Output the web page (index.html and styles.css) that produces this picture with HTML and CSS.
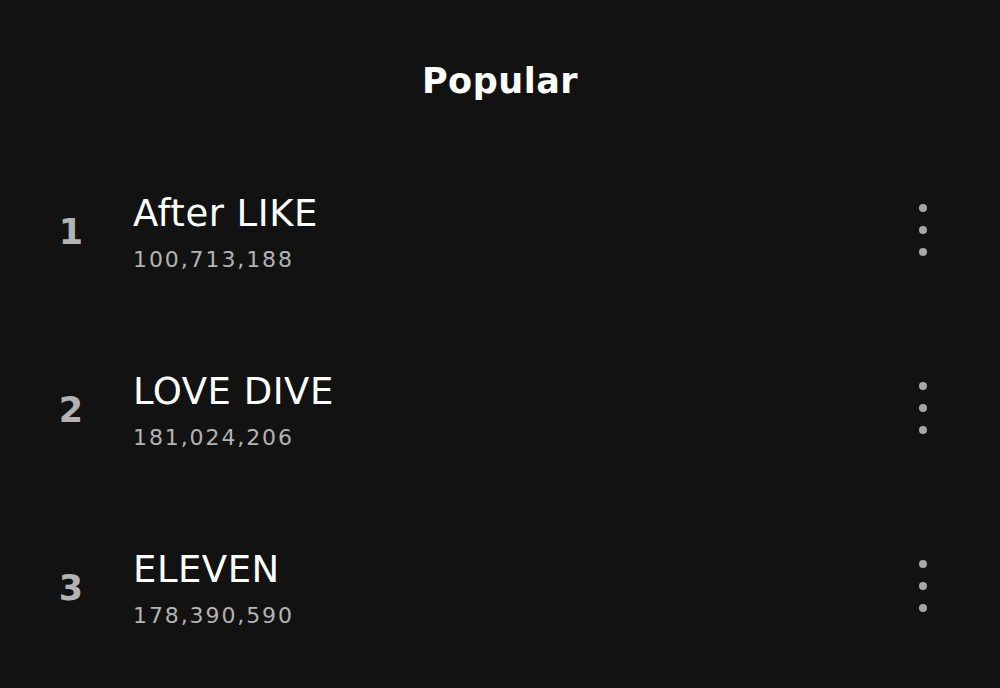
FILE: index.html
```html
<!DOCTYPE html>
<html lang="en">
<head>
  <meta charset="UTF-8">
  <title>Popular</title>
  <link rel="stylesheet" href="styles.css">
</head>
<body>

  <!-- Header -->
  <div class="header">
    <h1>Popular</h1>
  </div>

  <!-- Track list -->
  <div class="tracks">
    <div class="track">
      <span class="rank">1</span>
      <div class="info">
        <div class="title">After LIKE</div>
        <div class="plays">100,713,188</div>
      </div>
      <span class="more"><i></i><i></i><i></i></span>
    </div>

    <div class="track">
      <span class="rank">2</span>
      <div class="info">
        <div class="title">LOVE DIVE</div>
        <div class="plays">181,024,206</div>
      </div>
      <span class="more"><i></i><i></i><i></i></span>
    </div>

    <div class="track">
      <span class="rank">3</span>
      <div class="info">
        <div class="title">ELEVEN</div>
        <div class="plays">178,390,590</div>
      </div>
      <span class="more"><i></i><i></i><i></i></span>
    </div>
  </div>

</body>
</html>
```

FILE: styles.css
```css
body {
  margin: 0;
  background-color: #121212;
  color: #fff;
  font-family: "DejaVu Sans", sans-serif;
}

.header {
  height: 143px;
  text-align: center;
}

h1 {
  margin: 0;
  padding-top: 60px;
  font-size: 35px;
  line-height: 42px;
  font-weight: bold;
  letter-spacing: 0.5px;
}

.track {
  display: flex;
  align-items: center;
  height: 178px;
  padding: 0 73px 0 40px;
}

.rank {
  width: 62px;
  text-align: center;
  font-size: 35px;
  font-weight: bold;
  color: #b3b3b3;
}

.info {
  flex: 1;
  margin-left: 31px;
}

.title {
  font-size: 37px;
  line-height: 44px;
  letter-spacing: 0.5px;
}

.plays {
  margin-top: 11px;
  font-size: 22px;
  letter-spacing: 1.9px;
  color: #b3b3b3;
}

.more {
  display: flex;
  flex-direction: column;
  gap: 14px;
  margin-top: -4px;
}

.more i {
  width: 8px;
  height: 8px;
  border-radius: 50%;
  background-color: #a7a7a7;
}
```
